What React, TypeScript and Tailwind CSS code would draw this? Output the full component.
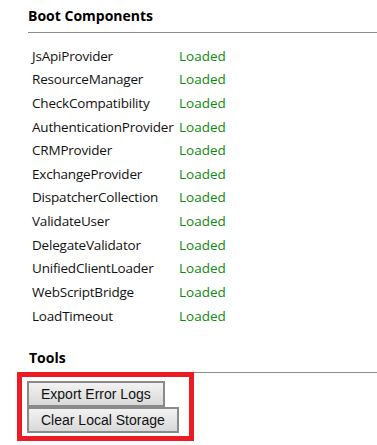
import React from "react";

const components = [
  "JsApiProvider",
  "ResourceManager",
  "CheckCompatibility",
  "AuthenticationProvider",
  "CRMProvider",
  "ExchangeProvider",
  "DispatcherCollection",
  "ValidateUser",
  "DelegateValidator",
  "UnifiedClientLoader",
  "WebScriptBridge",
  "LoadTimeout",
];

function ToolButton({ label }: { label: string }) {
  return (
    <button
      type="button"
      className="block h-[26px] border-2 border-[#8a8a8a] bg-gradient-to-b from-[#f2f2f2] to-[#d9d9d9] px-[12px] text-[14px] leading-none text-[#111]"
      style={{ fontFamily: '"Liberation Sans", Arial, sans-serif' }}
    >
      {label}
    </button>
  );
}

export default function App() {
  return (
    <div
      className="h-[445px] w-[377px] overflow-hidden bg-white text-[14px] text-[#111]"
      style={{ fontFamily: '"Open Sans", "Noto Sans", sans-serif' }}
    >
      <div className="pl-[28px] pt-[6px]">
        <h2 className="h-[26px] text-[14px] leading-[20px] font-bold text-black">
          Boot Components
        </h2>
        <div className="h-px bg-[#8c8c8c]" />
      </div>

      <div className="pl-[32px] pt-[11px]">
        {components.map((name) => (
          <div key={name} className="flex h-[23.64px] items-center">
            <span className="w-[147px] text-[13.5px] tracking-[-0.2px]">{name}</span>
            <span className="text-[13.5px] text-[#0e8a0e]">Loaded</span>
          </div>
        ))}
      </div>

      <div className="pl-[29px] pt-[21px]">
        <h2 className="h-[23px] text-[14px] leading-[18px] font-bold text-black">Tools</h2>
      </div>

      <div className="flex items-start">
        <div className="ml-[17px] h-[69px] w-[177px] shrink-0 border-[5px] border-[#ed1c24] pl-[5px] pt-[4px]">
          <ToolButton label="Export Error Logs" />
          <ToolButton label="Clear Local Storage" />
        </div>
        <div className="h-px flex-1 bg-[#8c8c8c]" />
      </div>
    </div>
  );
}
